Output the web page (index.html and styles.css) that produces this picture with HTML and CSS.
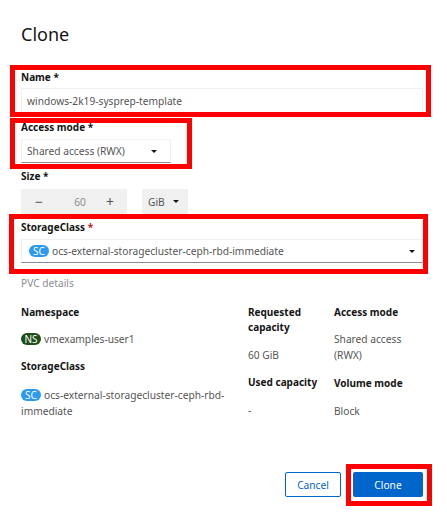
FILE: index.html
```html
<!DOCTYPE html>
<html lang="en">
<head>
  <meta charset="UTF-8">
  <title>Clone</title>
  <link rel="stylesheet" href="styles.css">
</head>
<body>
  <div class="modal">
    <h1 class="modal-title">Clone</h1>

    <div class="field field-name">
      <div class="field-label">Name *</div>
      <div class="text-input">windows-2k19-sysprep-template</div>
    </div>

    <div class="field field-access">
      <div class="field-label">Access mode *</div>
      <div class="select select-access">
        <span>Shared access (RWX)</span>
        <span class="caret"></span>
      </div>
    </div>

    <div class="field field-size">
      <div class="field-label">Size *</div>
      <div class="size-row">
        <div class="stepper">
          <span class="step-btn">&minus;</span>
          <span class="step-value">60</span>
          <span class="step-btn">+</span>
        </div>
        <div class="unit">GiB <span class="caret"></span></div>
      </div>
    </div>

    <div class="field field-storage">
      <div class="field-label">StorageClass <span class="req">*</span></div>
      <div class="select select-storage">
        <span class="with-badge"><span class="badge badge-sc">SC</span>ocs-external-storagecluster-ceph-rbd-immediate</span>
        <span class="caret"></span>
      </div>
    </div>

    <div class="section-title">PVC details</div>

    <div class="details">
      <div class="col col-left">
        <div class="term term-ns">Namespace</div>
        <div class="desc desc-ns"><span class="badge badge-ns">NS</span>vmexamples-user1</div>
        <div class="term term-sc">StorageClass</div>
        <div class="desc desc-sc"><span class="badge badge-sc">SC</span>ocs-external-storagecluster-ceph-rbd-immediate</div>
      </div>
      <div class="col col-mid">
        <div class="term">Requested capacity</div>
        <div class="desc desc-cap">60 GiB</div>
        <div class="term term-used">Used capacity</div>
        <div class="desc desc-used">-</div>
      </div>
      <div class="col col-right">
        <div class="term">Access mode</div>
        <div class="desc desc-mode">Shared access (RWX)</div>
        <div class="term term-vol">Volume mode</div>
        <div class="desc desc-used">Block</div>
      </div>
    </div>

    <div class="actions">
      <button class="btn btn-cancel">Cancel</button>
      <button class="btn btn-clone">Clone</button>
    </div>
  </div>

  <!-- red highlights drawn on top of the screenshot -->
  <div class="mark mark-name"></div>
  <div class="mark mark-access"></div>
  <div class="mark mark-storage"></div>
  <div class="mark mark-clone"></div>
</body>
</html>
```

FILE: styles.css
```css
html, body { margin: 0; padding: 0; }
body {
  font-family: "Noto Sans", "Open Sans", sans-serif;
  font-size: 10.2px;
  color: #151515;
  background-color: white;
  width: 447px;
  height: 518px;
  overflow: hidden;
  position: relative;
}
.modal { padding: 24px 24px 0 21px; }
.modal-title {
  font-size: 18px;
  font-weight: 400;
  line-height: 20px;
  margin: 0;
}
.field-label {
  font-weight: 700;
  font-size: 10px;
  line-height: 13px;
}
.req { color: #c9190b; }
.field-name { margin-top: 27px; }
.field-access { margin-top: 7px; }
.field-size { margin-top: 7px; }
.field-storage { margin-top: 7px; }
.field-name .field-label { margin-bottom: 4px; }
.field-access .field-label,
.field-storage .field-label { margin-bottom: 5px; }
.field-size .field-label { margin-bottom: 6px; }

.text-input {
  height: 26px;
  line-height: 24px;
  padding-left: 5px;
  border: 1px solid #f0f0f0;
  box-sizing: border-box;
  color: #555;
}
.select {
  height: 24px;
  display: flex;
  align-items: center;
  justify-content: space-between;
  box-sizing: border-box;
  padding: 0 7px 0 7px;
  border: 1px solid #f0f0f0;
  border-bottom: 1px solid #8a8d90;
  color: #555;
}
.select-access { width: 150px; padding: 0 13px 0 5px; }
.with-badge { display: flex; align-items: center; }
.caret {
  display: inline-block;
  width: 0;
  height: 0;
  border-left: 3.5px solid transparent;
  border-right: 3.5px solid transparent;
  border-top: 3.5px solid #151515;
}
.size-row { display: flex; gap: 15px; }
.stepper {
  width: 106px;
  height: 25px;
  background-color: #f0f0f0;
  display: flex;
  align-items: center;
  color: #555;
}
.step-btn { width: 36px; text-align: center; font-size: 14px; }
.step-value { flex: 1; text-align: center; color: #8a8d90; padding-left: 12px; }
.step-btn:last-child { padding-left: 2px; width: 34px; }
.unit {
  width: 46px;
  height: 25px;
  box-sizing: border-box;
  padding-left: 6px;
  background-color: #f0f0f0;
  display: flex;
  align-items: center;
  gap: 8px;
  color: #555;
}
.badge {
  display: inline-block;
  flex: none;
  width: 20px;
  height: 12px;
  line-height: 12px;
  border-radius: 6px;
  color: white;
  text-align: center;
  margin-right: 3px;
  font-size: 10px;
}
.badge-sc { background-color: #2b9af3; }
.badge-ns { background-color: #1e4f18; }
.section-title {
  margin-top: 14px;
  line-height: 13px;
  color: #8a8d90;
}
.details {
  display: grid;
  grid-template-columns: 227px 86px 89px;
  margin-top: 15px;
}
.col-left { padding-right: 8px; }
.term { font-weight: 700; font-size: 10px; line-height: 15px; }
.desc { line-height: 16px; color: #555; }
.desc-ns { margin-top: 11px; }
.term-sc { margin-top: 12px; }
.desc-sc { margin-top: 13px; }
.desc-cap { margin-top: 12px; }
.term-used { margin-top: 12px; }
.desc-used { margin-top: 12px; }
.desc-mode { margin-top: 11px; }
.term-vol { margin-top: 13px; }
.actions {
  position: absolute;
  right: 24px;
  top: 472px;
  display: flex;
  gap: 12px;
}
.btn {
  height: 25px;
  border-radius: 2px;
  font-family: inherit;
  font-size: 10.2px;
  padding: 0;
  box-sizing: border-box;
  background-color: white;
}
.btn-cancel { width: 56px; border: 1px solid #06c; color: #06c; }
.btn-clone { width: 70px; border: none; background-color: #06c; color: white; }

.mark {
  position: absolute;
  box-sizing: border-box;
  border: 5px solid #ff0000;
}
.mark-name { left: 10px; top: 65px; width: 421px; height: 52px; }
.mark-access { left: 10px; top: 118px; width: 182px; height: 51px; }
.mark-storage { left: 9px; top: 214px; width: 419px; height: 60px; }
.mark-clone { left: 346px; top: 464px; width: 86px; height: 42px; }
```
